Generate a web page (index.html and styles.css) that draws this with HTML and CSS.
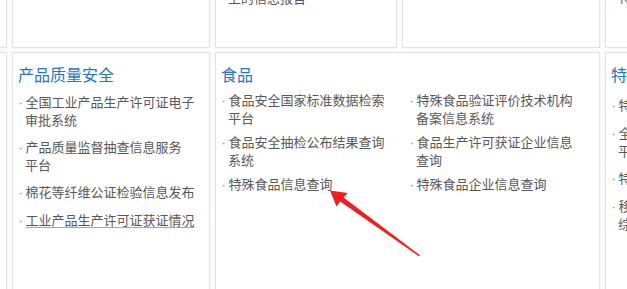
FILE: index.html
```html
<!DOCTYPE html>
<html lang="zh-CN">
<head>
<meta charset="utf-8">
<title>服务导航</title>
<link rel="stylesheet" href="styles.css">
</head>
<body>
<div class="board">
  <div class="row row-top">
    <div class="card w199"></div>
    <div class="card w198"></div>
    <div class="card w182">
      <ul class="links top-links">
        <li>消费品召回及伤害事故监测上的信息报告</li>
      </ul>
    </div>
    <div class="card w198"></div>
    <div class="card w198">
      <ul class="links top-links top-single">
        <li>特种设备安全监察信息</li>
      </ul>
    </div>
  </div>
  <div class="row row-bottom">
    <div class="card w199"></div>
    <div class="card w198 section">
      <h3 class="title">产品质量安全</h3>
      <ul class="links list-a">
        <li>全国工业产品生产许可证电子审批系统</li>
        <li>产品质量监督抽查信息服务<span class="nw">平台</span></li>
        <li>棉花等纤维公证检验信息发布</li>
        <li><span class="ul">工业产品生产许可证获证情况</span></li>
      </ul>
    </div>
    <div class="card w385 section">
      <h3 class="title">食品</h3>
      <ul class="links list-b two-col">
        <li>食品安全国家标准数据检索平台</li>
        <li>特殊食品验证评价技术机构备案信息系统</li>
        <li>食品安全抽检公布结果查询系统</li>
        <li>食品生产许可获证企业信息查询</li>
        <li>特殊食品信息查询</li>
        <li>特殊食品企业信息查询</li>
      </ul>
    </div>
    <div class="card w198 section">
      <h3 class="title">特种设备</h3>
      <ul class="links list-c">
        <li>特种设备使用登记信息查询</li>
        <li>全国特种设备公示信息查询<span class="nw">平台</span></li>
        <li>特种设备检验检测机构查询</li>
        <li>移动式压力容器充装单位信息综合查询</li>
      </ul>
    </div>
  </div>
</div>
<svg class="arrow" width="627" height="289" viewBox="0 0 627 289" aria-hidden="true">
  <polygon points="330,190.5 347.5,193 343.6,197.6 420,255.2 419.2,256.4 340.2,201.4 336.5,206.5" fill="#f41c1c"/>
</svg>
</body>
</html>
```
FILE: styles.css
```css
* { box-sizing: border-box; }

html, body {
  margin: 0;
  padding: 0;
  background: #ffffff;
}

body {
  width: 627px;
  height: 289px;
  overflow: hidden;
  position: relative;
  font-family: "Noto Sans CJK SC", "Microsoft YaHei", sans-serif;
  font-size: 13px;
  color: #555555;
}

.board {
  margin-left: -192px;
  width: 1100px;
}

.row {
  display: flex;
  gap: 5px;
  align-items: flex-start;
}

.row-top {
  margin-top: -40px;
}

.row-bottom {
  margin-top: 4px;
}

.card {
  flex: none;
  background: #ffffff;
  border: 1px solid #e3e3e3;
  box-shadow: 0 0 3px rgba(0, 0, 0, 0.07);
  padding: 9px 5px 0 5px;
  overflow: hidden;
}

.row-top .card { height: 88px; padding-top: 10px; }
.row-bottom .card { height: 260px; }

.w199 { width: 199px; }
.w198 { width: 198px; }
.w182 { width: 182px; }
.w385 { width: 385px; }

.title {
  margin: 0;
  font-size: 16px;
  line-height: 24px;
  font-weight: normal;
  color: #2677c2;
  white-space: nowrap;
}

.links {
  list-style: none;
  margin: 0;
  padding: 0;
}

.links li {
  line-height: 17px;
  padding-left: 7px;
  text-indent: -7px;
  color: #585858;
}

.links li::before {
  content: "·";
  display: inline-block;
  width: 7px;
  text-indent: 0;
  font-family: "Liberation Sans", sans-serif;
  color: #888888;
  padding-left: 0.5px;
}

.top-single { padding-top: 17px; }

.list-a { margin-top: 7px; }
.list-a li { margin-bottom: 10px; }

.list-b { margin-top: 5px; }
.two-col {
  display: grid;
  grid-template-columns: 188px 188px;
  row-gap: 7px;
}
.two-col li { max-width: 170px; }

.list-c { margin-top: 10px; }
.list-c li { margin-bottom: 10px; }

.nw { white-space: nowrap; }
.ul {
  text-decoration: underline;
  text-decoration-color: #a8a8a8;
  text-underline-offset: 2px;
}

.arrow {
  position: absolute;
  left: 0;
  top: 0;
  pointer-events: none;
}
```
